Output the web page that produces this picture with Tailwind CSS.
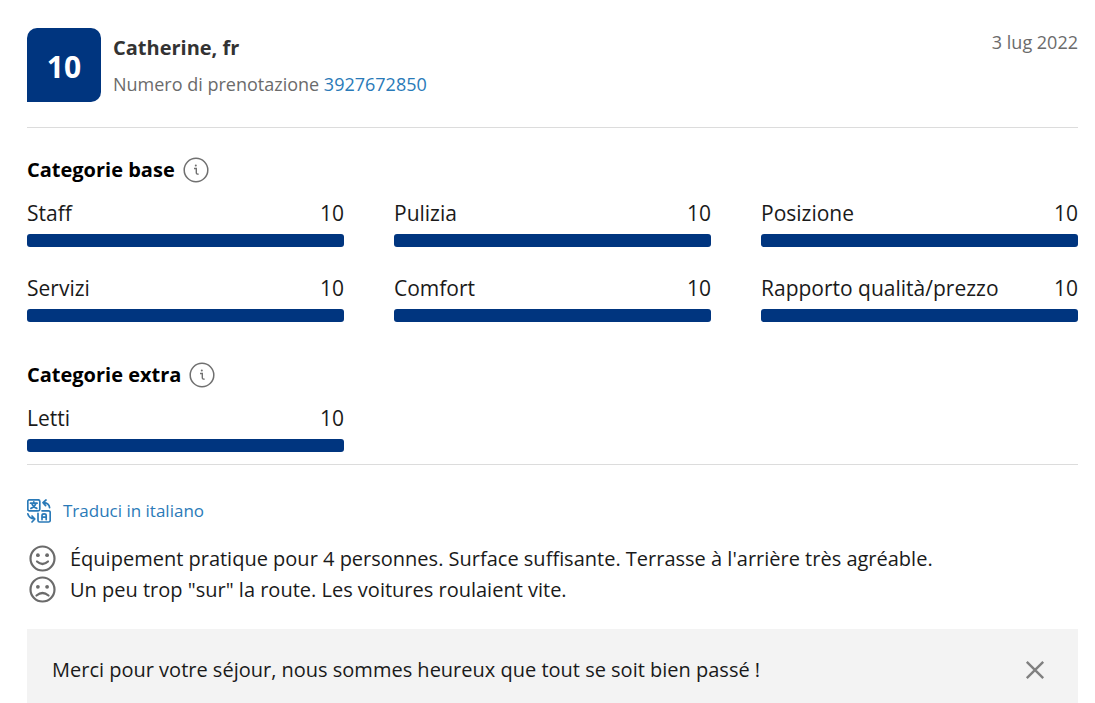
<!DOCTYPE html>
<html lang="it">
  <head>
    <meta charset="UTF-8" />
    <meta name="viewport" content="width=device-width, initial-scale=1.0" />
    <script src="https://cdn.jsdelivr.net/npm/@tailwindcss/browser@4"></script>
    <title>Recensione - Catherine</title>
  </head>
  <body class="bg-white text-[#1a1a1a] font-['Open_Sans','Noto_Sans',sans-serif] text-[21px] leading-7 overflow-x-hidden">
    <main class="pl-[27px] pr-[17px] pt-7">
      <header class="flex items-start border-b border-[#dcdcdc] pb-[25px]">
        <div class="flex size-[74px] shrink-0 items-center justify-center rounded-[10px] rounded-bl-none bg-[#00357f] pt-1 text-[30px] font-bold text-white">10</div>
        <div class="ml-3 mt-1 flex-1">
          <h1 class="text-[20px] leading-8 font-bold text-[#333]">Catherine, fr</h1>
          <p class="mt-1 text-[18px] leading-8 text-[#6b6b6b]">
            Numero di prenotazione
            <a href="#" class="text-[#2a7ab8]">3927672850</a>
          </p>
        </div>
        <time datetime="2022-07-03" class="text-[18px] text-[#6b6b6b]">3 lug 2022</time>
      </header>

      <section class="mt-7">
        <h2 class="flex items-center gap-2 text-[20px] leading-7 font-bold text-black">
          Categorie base
          <button type="button" aria-label="Informazioni sulle categorie base">
            <svg class="size-[26px]" viewBox="0 0 26 26" fill="none" stroke="#707070">
              <circle cx="13" cy="13" r="11.8" stroke-width="1.5" />
              <path d="M11 11.5h2.3v4.2q0 1.6 2.4 1.4" stroke-width="1.4" />
              <circle cx="12.8" cy="8.4" r="1" fill="#707070" stroke="none" />
            </svg>
          </button>
        </h2>
        <div class="mt-[15px] grid grid-cols-3 gap-x-[50px] gap-y-[27px]">
          <div>
            <div class="flex justify-between"><span>Staff</span><span>10</span></div>
            <div class="mt-[7px] h-[13px] rounded-[3px] bg-[#00357f]"></div>
          </div>
          <div>
            <div class="flex justify-between"><span>Pulizia</span><span>10</span></div>
            <div class="mt-[7px] h-[13px] rounded-[3px] bg-[#00357f]"></div>
          </div>
          <div>
            <div class="flex justify-between"><span>Posizione</span><span>10</span></div>
            <div class="mt-[7px] h-[13px] rounded-[3px] bg-[#00357f]"></div>
          </div>
          <div>
            <div class="flex justify-between"><span>Servizi</span><span>10</span></div>
            <div class="mt-[7px] h-[13px] rounded-[3px] bg-[#00357f]"></div>
          </div>
          <div>
            <div class="flex justify-between"><span>Comfort</span><span>10</span></div>
            <div class="mt-[7px] h-[13px] rounded-[3px] bg-[#00357f]"></div>
          </div>
          <div>
            <div class="flex justify-between"><span>Rapporto qualità/prezzo</span><span>10</span></div>
            <div class="mt-[7px] h-[13px] rounded-[3px] bg-[#00357f]"></div>
          </div>
        </div>
      </section>

      <section class="mt-[39px] border-b border-[#dcdcdc] pb-3">
        <h2 class="flex items-center gap-2 text-[20px] leading-7 font-bold text-black">
          Categorie extra
          <button type="button" aria-label="Informazioni sulle categorie extra">
            <svg class="size-[26px]" viewBox="0 0 26 26" fill="none" stroke="#707070">
              <circle cx="13" cy="13" r="11.8" stroke-width="1.5" />
              <path d="M11 11.5h2.3v4.2q0 1.6 2.4 1.4" stroke-width="1.4" />
              <circle cx="12.8" cy="8.4" r="1" fill="#707070" stroke="none" />
            </svg>
          </button>
        </h2>
        <div class="mt-[15px] grid grid-cols-3 gap-x-[50px]">
          <div>
            <div class="flex justify-between"><span>Letti</span><span>10</span></div>
            <div class="mt-[7px] h-[13px] rounded-[3px] bg-[#00357f]"></div>
          </div>
        </div>
      </section>

      <button type="button" class="mt-8 flex items-center gap-3 text-[17px] leading-7 text-[#2a7ab8]">
        <svg class="size-6" viewBox="0 0 24 24" fill="none" stroke="#2a7ab8" stroke-width="1.7" stroke-linecap="round" stroke-linejoin="round">
          <rect x="0.8" y="0.8" width="12" height="11" rx="1.6" />
          <path d="M3.5 4.2h6.6M6.8 2.8v1.4M4.8 4.4q1.2 3.6 5 5M8.9 4.4q-1.2 3.6-5 5" />
          <path d="M15 11.8h6.6a1.6 1.6 0 0 1 1.6 1.6v8a1.6 1.6 0 0 1-1.6 1.6h-9a1.6 1.6 0 0 1-1.6-1.6v-7" />
          <path d="M15 20.6v-4.2q0-1.6 2.1-1.6t2.1 1.6v4.2M15 18.2h4.2" />
          <path d="M22.6 8.6q-.4-4.4-6-5M19 1l-3 2.6 2.6 3" />
          <path d="M.8 14.8q1 4.6 6.8 5.2M5 17l2.8 3L5 23" />
        </svg>
        Traduci in italiano
      </button>

      <ul class="mt-[18px] text-[20px] leading-[31px]">
        <li class="flex items-center gap-[14px]">
          <svg class="ml-[2px] size-[27px] shrink-0" viewBox="0 0 27 27" fill="none" stroke="#6b6b6b" stroke-width="2.2" stroke-linecap="round">
            <circle cx="13.5" cy="13.5" r="12" />
            <path d="M8 16.5q5.5 5 11 0" />
            <circle cx="8.9" cy="10.2" r="1.9" fill="#6b6b6b" stroke="none" />
            <circle cx="18.1" cy="10.2" r="1.9" fill="#6b6b6b" stroke="none" />
          </svg>
          Équipement pratique pour 4 personnes. Surface suffisante. Terrasse à l'arrière très agréable.
        </li>
        <li class="flex items-center gap-[14px]">
          <svg class="ml-[2px] size-[27px] shrink-0" viewBox="0 0 27 27" fill="none" stroke="#6b6b6b" stroke-width="2.2" stroke-linecap="round">
            <circle cx="13.5" cy="13.5" r="12" />
            <path d="M7.5 19.5q6-5 12 0" />
            <circle cx="8.9" cy="10.8" r="1.9" fill="#6b6b6b" stroke="none" />
            <circle cx="18.1" cy="10.8" r="1.9" fill="#6b6b6b" stroke="none" />
          </svg>
          Un peu trop "sur" la route. Les voitures roulaient vite.
        </li>
      </ul>

      <div class="mt-6 flex items-center justify-between bg-[#f3f3f3] pt-[27px] pr-[33px] pb-[19px] pl-[25px] text-[20px] leading-7">
        <p>Merci pour votre séjour, nous sommes heureux que tout se soit bien passé !</p>
        <button type="button" aria-label="Chiudi">
          <svg class="size-5" viewBox="0 0 20 20" fill="none" stroke="#808080" stroke-width="2.4">
            <path d="M1.8 1.8l16.4 16.4M18.2 1.8L1.8 18.2" />
          </svg>
        </button>
      </div>
    </main>
  </body>
</html>
